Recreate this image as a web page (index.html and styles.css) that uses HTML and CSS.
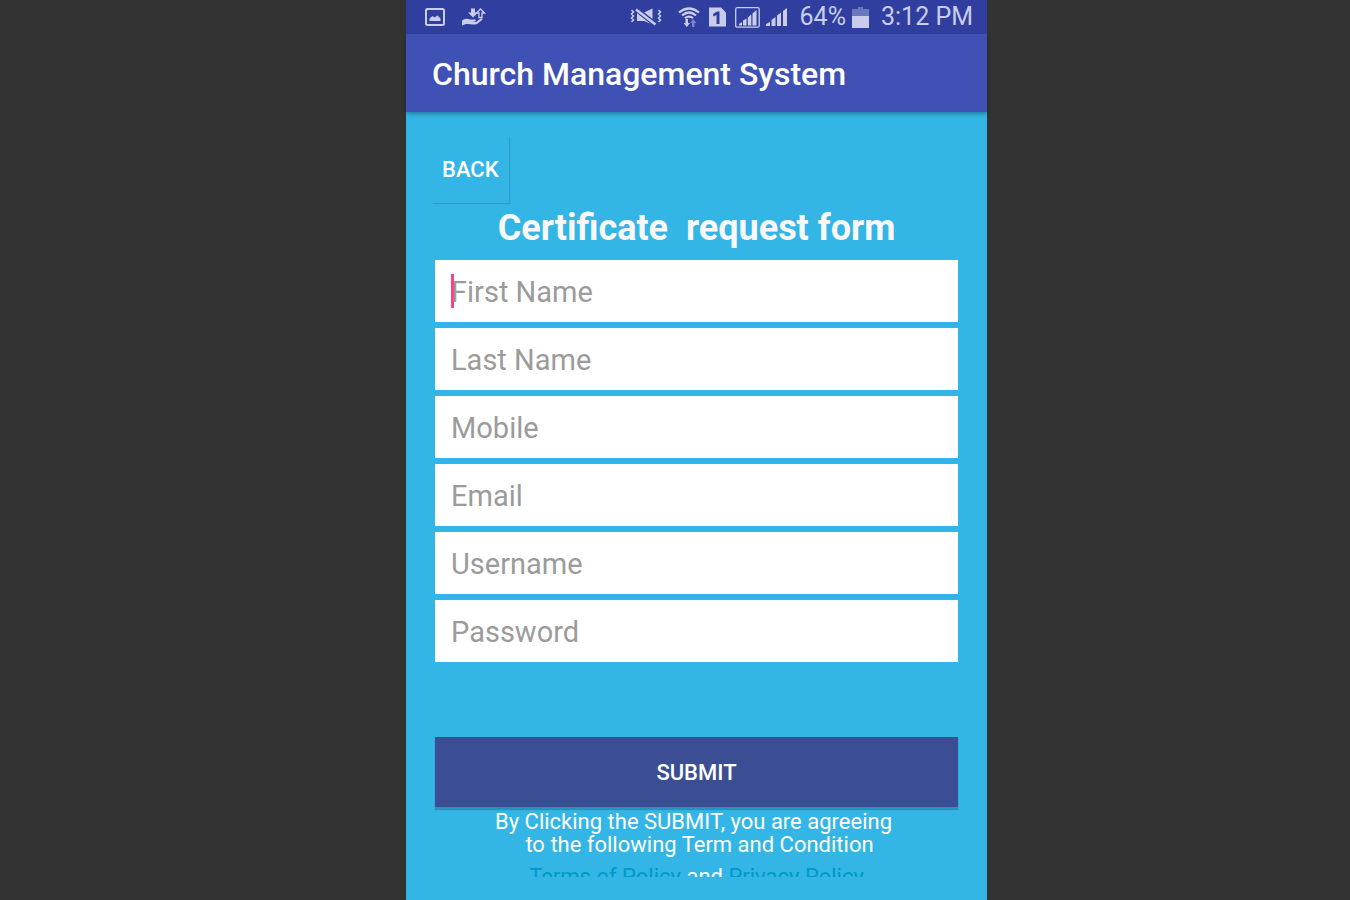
FILE: index.html
```html
<!DOCTYPE html>
<html lang="en">
<head>
<meta charset="utf-8">
<meta name="viewport" content="width=device-width, initial-scale=1">
<title>Church Management System</title>
<link rel="stylesheet" href="styles.css">
</head>
<body>
<div class="phone">
  <div class="status-bar">
    <div class="status-group status-left">
      <svg width="20" height="18" viewBox="0 0 20 18" aria-hidden="true"><rect x="1" y="1" width="18" height="16" rx="1.500" fill="none" stroke="currentColor" stroke-width="2"/><path d="M4.500 13V10.500L7.500 8L9.500 9.500L12.500 7.500L15.500 10.500V13Z" fill="currentColor"/></svg>
      <svg width="24" height="18" viewBox="0 0 24 18" aria-hidden="true"><path d="M9 0.500h4v4h3l-5 5-5-5h3z" fill="currentColor"/><path d="M18.500 1l4 4h-2.500v4.500h-3V5h-2.500z" fill="none" stroke="currentColor" stroke-width="1.300"/><path d="M0 12.500C3 10 6 10.500 8 11.500H13C14.500 12 14 13.500 12.500 13.500H9L14 14L18 11C20 9.800 21.500 11 19.500 12.500L15 16C11 17.500 7 15.500 4 16L0 17.500Z" fill="currentColor"/></svg>
    </div>
    <div class="status-group status-right">
      <svg class="mute-icon" width="32" height="18" viewBox="0 0 32 18" aria-hidden="true"><path d="M7 4.500H14L22.500 0.500V16.500L14 13H7Z" fill="currentColor"/><path d="M6 1L26 17" stroke="#303f9f" stroke-width="5"/><path d="M6 1.500L25.500 16.500" stroke="currentColor" stroke-width="2.400"/><path d="M1.500 2l2 2-2 2 2 2-2 2 2 2-2 2M28.500 2l2 2-2 2 2 2-2 2 2 2-2 2" fill="none" stroke="currentColor" stroke-width="1.500"/></svg>
      <svg class="wifi-icon" width="22" height="20" viewBox="0 0 22 20" aria-hidden="true"><g fill="none" stroke="currentColor" stroke-width="2.200"><path d="M1 5.500Q11-2.500 21 5.500"/><path d="M4 8.500Q11 2.500 18 8.500"/><path d="M7 11.200Q11 8 15 11.200"/></g><path d="M7.500 12h2.500v4h2l-3.200 4-3.200-4h1.900z" fill="currentColor"/><path d="M14 20h2.500v-4h2l-3.200-4-3.200 4H14z" fill="currentColor" opacity=".5"/></svg>
      <svg class="sim-icon" width="17" height="20" viewBox="0 0 17 20" aria-hidden="true"><path d="M0 0.500h12l5 5v14H0z" fill="currentColor"/><path d="M4 7L8 4.500H10.500V17H7.500V8L4.500 9.500Z" fill="#303f9f"/></svg>
      <svg class="signal-boxed" width="25" height="21" viewBox="0 0 25 21" aria-hidden="true"><rect x=".7" y=".7" width="23.500" height="19.500" rx="1.500" fill="none" stroke="currentColor" stroke-width="1.300"/><path d="M4 18.500v-1.500l3-2v3.500zM8 18.500v-5l3.500-2v7zM12.800 18.500V10.500l3.500-3v11zM17.500 18.500V6.500l4-3.500v15.500z" fill="currentColor"/></svg>
      <svg class="signal-icon" width="22" height="18" viewBox="0 0 22 18" aria-hidden="true"><path d="M0 18v-2l4-2v4zM5.500 18v-6l4-3v9zM11 18V7.500l4-3v13.500zM17 18V3l4-3v18z" fill="currentColor"/></svg>
      <span class="battery-text">64%</span>
      <svg class="battery-icon" width="17" height="21" viewBox="0 0 17 21" aria-hidden="true"><path d="M0 2h6V0h5v2h6v7H0z" fill="currentColor" opacity=".4"/><path d="M0 9h17v12H0z" fill="currentColor"/></svg>
      <span>3:12 PM</span>
    </div>
  </div>
  <header class="app-bar"><h1 class="app-title">Church Management System</h1></header>
  <main class="content">
    <button class="back-button" type="button">BACK</button>
    <form class="request-form">
      <h2 class="form-title">Certificate&nbsp; request form</h2>
      <div class="fields">
        <div class="field"><input class="text-input" type="text" placeholder="First Name" aria-label="First Name"><span class="caret"></span></div>
        <div class="field"><input class="text-input" type="text" placeholder="Last Name" aria-label="Last Name"></div>
        <div class="field"><input class="text-input" type="tel" placeholder="Mobile" aria-label="Mobile"></div>
        <div class="field"><input class="text-input" type="email" placeholder="Email" aria-label="Email"></div>
        <div class="field"><input class="text-input" type="text" placeholder="Username" aria-label="Username"></div>
        <div class="field"><input class="text-input" type="password" placeholder="Password" aria-label="Password"></div>
      </div>
      <button class="submit-button" type="submit">SUBMIT</button>
      <div class="notice">
        <p class="notice-start">By Clicking the SUBMIT, you are agreeing</p>
        <p class="notice-end">to the following Term and Condition</p>
      </div>
      <p class="policy-links"><a href="#terms">Terms of Policy</a> and <a href="#privacy">Privacy Policy</a></p>
    </form>
  </main>
</div>
</body>
</html>
```

FILE: styles.css
```css
* {
  box-sizing: border-box;
}

body {
  margin: 0;
  min-height: 100vh;
  display: grid;
  grid-template-columns: 406fr minmax(360px, 581fr) 363fr;
  background: #333333;
  color: #ffffff;
  font-family: Roboto, "Liberation Sans", sans-serif;
}

h1, h2, p {
  margin: 0;
}

button, input {
  font-family: inherit;
  border: 0;
  border-radius: 0;
}

.phone {
  grid-column: 2;
  display: flex;
  flex-direction: column;
  background: #33b5e5;
}

.status-bar {
  height: 34px;
  padding: 0 14px 0 19px;
  display: flex;
  align-items: center;
  justify-content: space-between;
  background: #303f9f;
  color: #c9cdea;
  font-size: 25px;
  line-height: 34px;
  white-space: nowrap;
}

.status-group {
  display: flex;
  align-items: center;
}

.status-left {
  gap: 17px;
}

.mute-icon {
  margin-right: 16px;
}

.wifi-icon,
.sim-icon {
  margin-right: 9px;
}

.signal-boxed {
  margin-right: 6px;
}

.signal-icon {
  margin-right: 12px;
}

.battery-icon {
  margin: 0 12px 0 6px;
}

.app-bar {
  height: 78px;
  padding: 2px 26px 0;
  display: flex;
  align-items: center;
  background: #3f51b5;
  box-shadow: 0 2px 4px rgba(0, 0, 0, 0.3);
}

.app-title {
  font-size: 32px;
  line-height: 40px;
  font-weight: 500;
}

.content {
  padding: 24px 29px 22px;
}

.back-button {
  display: block;
  height: 67px;
  margin-left: -3px;
  padding: 0 10px;
  background: #33b5e5;
  color: #ffffff;
  font-size: 22px;
  font-weight: 500;
  box-shadow: 1px 1px 1px rgba(0, 0, 0, 0.12);
}

.form-title {
  padding: 5px 0 12px;
  color: #f8f8f8;
  font-size: 36px;
  line-height: 40px;
  font-weight: 700;
  text-align: center;
}

.fields {
  display: grid;
  gap: 6px;
}

.field {
  position: relative;
}

.text-input {
  display: block;
  width: 100%;
  height: 62px;
  padding: 2px 16px 0;
  background: #ffffff;
  color: #333333;
  font-size: 29px;
}

.text-input::placeholder {
  color: #9b9b9b;
  opacity: 1;
}

.caret {
  position: absolute;
  left: 16px;
  top: 14px;
  width: 3px;
  height: 34px;
  background: #ff4081;
}

.submit-button {
  display: block;
  width: 100%;
  height: 70px;
  margin-top: 75px;
  padding: 1px 0 0;
  background: #3b4d93;
  color: #ffffff;
  font-size: 22px;
  font-weight: 500;
  box-shadow: 0 3px 1px rgba(0, 0, 0, 0.18);
}

.notice {
  padding-top: 3px;
  font-size: 22px;
  line-height: 23px;
  text-align: center;
}

.notice-start {
  padding-right: 6px;
}

.notice-end {
  padding-left: 6px;
}

.policy-links {
  height: 21px;
  overflow: hidden;
  padding-top: 9px;
  font-size: 22px;
  line-height: 23px;
  text-align: center;
}

.policy-links a {
  color: #0099cc;
  text-decoration: none;
}
```
